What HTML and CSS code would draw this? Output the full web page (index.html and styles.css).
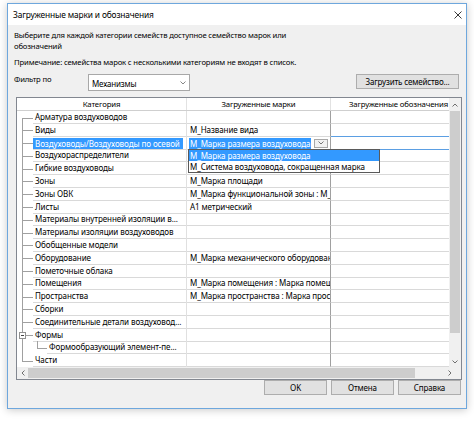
FILE: index.html
```html
<!DOCTYPE html>
<html lang="ru">
<head>
<meta charset="utf-8">
<title>Загруженные марки и обозначения</title>
<link rel="stylesheet" href="styles.css">
</head>
<body>
<div class="window">
  <div class="titlebar">
    <span class="title">Загруженные марки и обозначения</span>
    <svg class="close" width="8" height="8" viewBox="0 0 8 8"><path d="M0.5 0.5L7.5 7.5M7.5 0.5L0.5 7.5" stroke="#222" stroke-width="0.9" fill="none"/></svg>
  </div>
  <div class="body">
    <p class="intro">Выберите для каждой категории семейств доступное семейство марок или<br>обозначений</p>
    <p class="note">Примечание: семейства марок с несколькими категориям не входят в список.</p>
    <div class="filter">
      <span class="filter-label">Фильтр по</span>
      <div class="select"><span>Механизмы</span><svg width="6" height="4" viewBox="0 0 6 4"><path d="M0.5 0.5L3 3L5.5 0.5" stroke="#666" stroke-width="0.8" fill="none"/></svg></div>
      <div class="btn load">Загрузить семейство...</div>
    </div>
    <div class="grid">
      <div class="grid-main">
        <div class="table">
          <div class="thead">
            <div class="th c1h">Категория</div>
            <div class="th c2h">Загруженные марки</div>
            <div class="th c3h">Загруженные обозначения</div>
          </div>
          <div class="row"><div class="c1"><span class="t first"></span><span class="lbl">Арматура воздуховодов</span></div><div class="c2"></div><div class="c3"></div></div>
          <div class="row"><div class="c1"><span class="t"></span><span class="lbl">Виды</span></div><div class="c2">М_Название вида</div><div class="c3"></div></div>
          <div class="row sel"><div class="c1"><span class="t"></span><span class="lbl"><span class="hl">Воздуховоды/Воздуховоды по осевой</span></span></div><div class="c2 edit"><div class="combo"><span class="seltext">М_Марка размера воздуховода</span><span class="ddbtn"><svg width="6" height="4" viewBox="0 0 6 4"><path d="M0.5 0.5L3 3L5.5 0.5" stroke="#555" stroke-width="0.8" fill="none"/></svg></span></div><div class="dropdown"><div class="dd-item hi">М_Марка размера воздуховода</div><div class="dd-item">М_Система воздуховода, сокращенная марка</div></div></div><div class="c3"></div></div>
          <div class="row"><div class="c1"><span class="t"></span><span class="lbl">Воздухораспределители</span></div><div class="c2"></div><div class="c3"></div></div>
          <div class="row"><div class="c1"><span class="t"></span><span class="lbl">Гибкие воздуховоды</span></div><div class="c2"></div><div class="c3"></div></div>
          <div class="row"><div class="c1"><span class="t"></span><span class="lbl">Зоны</span></div><div class="c2">М_Марка площади</div><div class="c3"></div></div>
          <div class="row"><div class="c1"><span class="t"></span><span class="lbl">Зоны ОВК</span></div><div class="c2">М_Марка функциональной зоны : М_Марка</div><div class="c3"></div></div>
          <div class="row"><div class="c1"><span class="t"></span><span class="lbl">Листы</span></div><div class="c2">А1 метрический</div><div class="c3"></div></div>
          <div class="row"><div class="c1"><span class="t"></span><span class="lbl">Материалы внутренней изоляции в...</span></div><div class="c2"></div><div class="c3"></div></div>
          <div class="row"><div class="c1"><span class="t"></span><span class="lbl">Материалы изоляции воздуховодов</span></div><div class="c2"></div><div class="c3"></div></div>
          <div class="row"><div class="c1"><span class="t"></span><span class="lbl">Обобщенные модели</span></div><div class="c2"></div><div class="c3"></div></div>
          <div class="row"><div class="c1"><span class="t"></span><span class="lbl">Оборудование</span></div><div class="c2">М_Марка механического оборудования</div><div class="c3"></div></div>
          <div class="row"><div class="c1"><span class="t"></span><span class="lbl">Пометочные облака</span></div><div class="c2"></div><div class="c3"></div></div>
          <div class="row"><div class="c1"><span class="t"></span><span class="lbl">Помещения</span></div><div class="c2">М_Марка помещения : Марка помещения</div><div class="c3"></div></div>
          <div class="row"><div class="c1"><span class="t"></span><span class="lbl">Пространства</span></div><div class="c2">М_Марка пространства : Марка пространства</div><div class="c3"></div></div>
          <div class="row"><div class="c1"><span class="t"></span><span class="lbl">Сборки</span></div><div class="c2"></div><div class="c3"></div></div>
          <div class="row"><div class="c1"><span class="t"></span><span class="lbl">Соединительные детали воздуховод...</span></div><div class="c2"></div><div class="c3"></div></div>
          <div class="row"><div class="c1"><span class="t"><span class="minus"></span></span><span class="lbl">Формы</span></div><div class="c2"></div><div class="c3"></div></div>
          <div class="row"><div class="c1"><span class="t vline"></span><span class="t2"></span><span class="lbl">Формообразующий элемент-пе...</span></div><div class="c2"></div><div class="c3"></div></div>
          <div class="row"><div class="c1"><span class="t last"></span><span class="lbl">Части</span></div><div class="c2"></div><div class="c3"></div></div>
        </div>
        <div class="vscroll">
          <div class="sb-arrow up"><svg width="6" height="4" viewBox="0 0 6 4"><path d="M0.5 3.5L3 1L5.5 3.5" stroke="#606060" stroke-width="0.9" fill="none"/></svg></div>
          <div class="vthumb"></div>
          <div class="sb-arrow down"><svg width="6" height="4" viewBox="0 0 6 4"><path d="M0.5 0.5L3 3L5.5 0.5" stroke="#606060" stroke-width="0.9" fill="none"/></svg></div>
        </div>
      </div>
      <div class="hscroll">
        <div class="sb-arrow left"><svg width="4" height="6" viewBox="0 0 4 6"><path d="M3.5 0.5L1 3L3.5 5.5" stroke="#606060" stroke-width="0.9" fill="none"/></svg></div>
        <div class="htrack"><div class="hthumb"></div></div>
        <div class="sb-arrow right"><svg width="4" height="6" viewBox="0 0 4 6"><path d="M0.5 0.5L3 3L0.5 5.5" stroke="#606060" stroke-width="0.9" fill="none"/></svg></div>
        <div class="corner"></div>
      </div>
    </div>
    <div class="footer">
      <div class="btn">OK</div>
      <div class="btn">Отмена</div>
      <div class="btn">Справка</div>
    </div>
  </div>
</div>
</body>
</html>
```

FILE: styles.css
```css
* { box-sizing: border-box; }
html, body { margin: 0; padding: 0; }
body {
  background: #fff;
  width: 474px;
  height: 421px;
  overflow: hidden;
  font-family: "Noto Sans", "DejaVu Sans", sans-serif;
  font-size: 7.7px;
  letter-spacing: -0.15px;
  color: #000;
}
.window {
  margin: 3px 0 0 7px;
  width: 460px;
  height: 406px;
  border: 1px solid #6ea7dd;
  box-shadow: 0 1px 8px rgba(0, 0, 0, 0.22);
  display: flex;
  flex-direction: column;
  background: #f0f0f0;
}
.titlebar {
  flex: none;
  height: 21px;
  background: #fff;
  display: flex;
  align-items: center;
  justify-content: space-between;
  padding: 0 4px 0 5px;
}
.title { font-size: 8.4px; }
.close { display: block; }
.body {
  flex: 1;
  padding: 5px 3px 0 6px;
  display: flex;
  flex-direction: column;
}
.intro { margin: 0; line-height: 10.5px; }
.note { margin: 5.5px 0 0; line-height: 10.5px; }
.filter {
  margin-top: 7px;
  height: 17px;
  display: flex;
  align-items: flex-start;
}
.filter-label { width: 74px; line-height: 10px; }
.select {
  width: 102px;
  height: 17px;
  background: #fff;
  border: 1px solid #a8a8a8;
  display: flex;
  align-items: center;
  justify-content: space-between;
  padding: 1px 3px 0 3px;
  font-size: 8px;
}
.select svg { display: block; }
.btn {
  height: 15px;
  border: 1px solid #adadad;
  background: #e1e1e1;
  text-align: center;
  line-height: 13px;
  white-space: nowrap;
  font-size: 8px;
}
.load { margin-left: auto; margin-right: 4px; width: 103px; }
.grid {
  margin: 6px 0 0 2px;
  width: 446px;
  height: 283px;
  border: 1px solid #828790;
  background: #fff;
  display: flex;
  flex-direction: column;
}
.grid-main { flex: none; height: 269px; display: flex; }
.table { flex: 1; min-width: 0; display: flex; flex-direction: column; }
.thead {
  display: grid;
  grid-template-columns: 170px 144px minmax(0, 1fr);
  height: 13px;
  border-bottom: 1px solid #cfcfcf;
  font-size: 7.8px;
}
.th {
  line-height: 12px;
  text-align: center;
  white-space: nowrap;
  overflow: hidden;
  border-right: 1px solid #e2e2e2;
}
.c3h { text-align: left; padding-left: 18px; border-right: none; }
.row {
  display: grid;
  grid-template-columns: 170px 144px minmax(0, 1fr);
  height: 12.8px;
  line-height: 12px;
  font-size: 8.05px;
  letter-spacing: -0.1px;
}
.c1 { display: flex; min-width: 0; border-right: 1px solid #e0e0e0; }
.lbl {
  flex: 1;
  min-width: 0;
  border-bottom: 1px solid #d9d9d9;
  padding-left: 2px;
  white-space: nowrap;
  overflow: hidden;
}
.c2 {
  min-width: 0;
  border-right: 1px solid #a0a0a0;
  border-bottom: 1px solid #d9d9d9;
  padding-left: 3px;
  white-space: nowrap;
  overflow: hidden;
  position: relative;
}
.c3 { border-bottom: 1px solid #d9d9d9; }
.row.sel .lbl { padding-left: 0; display: flex; align-items: center; }
.hl { background: #3399ff; color: #fff; padding: 0 3px 0 2px; line-height: 11px; margin-top: 1px; }
.row.sel .c3 { border-bottom-color: #5b9fe3; box-shadow: 0 -1px 0 #5b9fe3; }
.c2.edit { overflow: visible; padding-left: 2px; z-index: 2; }
.combo { display: flex; align-items: center; height: 100%; }
.seltext { background: #3399ff; color: #fff; line-height: 11px; padding: 0 1px; margin-top: 1px; }
.ddbtn {
  margin-left: auto;
  margin-right: 2px;
  margin-top: 1px;
  width: 14px;
  height: 9px;
  border: 1px solid #a8a8a8;
  background: #f2f2f2;
  display: flex;
  align-items: center;
  justify-content: center;
}
.ddbtn svg { display: block; }
.dropdown {
  position: absolute;
  left: 1px;
  top: 12px;
  width: 192px;
  border: 1px solid #5a5a5a;
  background: #fff;
  line-height: 11px;
  color: #000;
}
.dd-item { height: 11px; padding-left: 1px; }
.dd-item.hi { background: #3399ff; color: #fff; }

.t { position: relative; width: 16px; flex: none; }
.t::before {
  content: "";
  position: absolute;
  left: 5px;
  top: 0;
  bottom: 0;
  border-left: 1px solid #a0a0a0;
}
.t::after {
  content: "";
  position: absolute;
  left: 5px;
  right: 0;
  top: 50%;
  border-top: 1px solid #a0a0a0;
}
.t.first::before { top: 50%; }
.t.last::before { bottom: 50%; }
.t.vline::after { display: none; }
.t2 { position: relative; width: 14px; flex: none; }
.t2::before {
  content: "";
  position: absolute;
  left: 4px;
  top: 0;
  bottom: 50%;
  border-left: 1px solid #a0a0a0;
}
.t2::after {
  content: "";
  position: absolute;
  left: 4px;
  right: 0;
  top: 50%;
  border-top: 1px solid #a0a0a0;
}
.minus {
  position: absolute;
  left: 2px;
  top: 50%;
  margin-top: -3px;
  width: 7px;
  height: 7px;
  border: 1px solid #919191;
  background: #fff;
  z-index: 1;
}
.minus::after {
  content: "";
  position: absolute;
  left: 1px;
  right: 1px;
  top: 2px;
  border-top: 1px solid #444;
}

.vscroll {
  flex: none;
  width: 12px;
  background: #f0f0f0;
  display: flex;
  flex-direction: column;
}
.sb-arrow { display: flex; align-items: center; justify-content: center; flex: none; }
.sb-arrow svg { display: block; }
.sb-arrow.up { height: 13px; }
.vthumb { height: 222px; margin: 0 1px; background: #cdcdcd; }
.sb-arrow.down { height: 11px; margin-top: auto; }
.hscroll {
  flex: none;
  height: 12px;
  background: #f0f0f0;
  display: flex;
}
.sb-arrow.left { width: 11px; }
.htrack { flex: 1; padding: 1px 0; }
.hthumb { width: 387px; height: 100%; background: #cdcdcd; }
.sb-arrow.right { width: 12px; }
.corner { width: 5px; flex: none; }
.footer {
  display: flex;
  justify-content: flex-end;
  gap: 4px;
  padding-right: 2px;
}
.footer .btn { width: 63px; }
```
